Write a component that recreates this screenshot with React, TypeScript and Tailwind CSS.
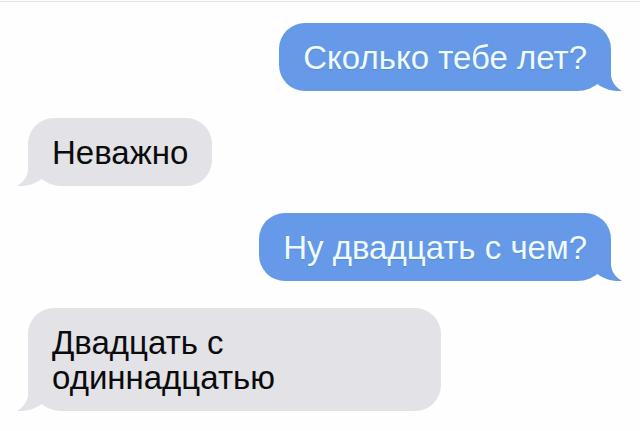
import React from 'react';
import clsx from 'clsx';

type Message = {
  id: number;
  text: string;
  mine: boolean;
};

const messages: Message[] = [
  { id: 1, text: 'Сколько тебе лет?', mine: true },
  { id: 2, text: 'Неважно', mine: false },
  { id: 3, text: 'Ну двадцать с чем?', mine: true },
  { id: 4, text: 'Двадцать с одиннадцатью', mine: false },
];

const Tail: React.FC<{ mine: boolean }> = ({ mine }) => (
  <svg
    aria-hidden="true"
    viewBox="0 0 32 36"
    className={clsx(
      'absolute bottom-0 w-8 h-9',
      mine ? '-right-[11px] text-[#6699e7]' : '-left-[11px] -scale-x-100 text-[#e2e2e7]'
    )}
  >
    <path
      fill="currentColor"
      d="M0 0H21V20C21.5 27 26 32.5 32 36C23 36.6 13.5 34 7.5 29L0 22Z"
    />
  </svg>
);

const Bubble: React.FC<{ message: Message }> = ({ message }) => (
  <li
    className={clsx(
      'relative w-fit max-w-[413px] px-6 pt-[17px] pb-4 rounded-[26px]',
      message.mine
        ? 'self-end rounded-br-[34px] bg-[#6699e7] text-[#effcff]'
        : 'self-start rounded-bl-[34px] bg-[#e2e2e7] text-[#0b0b0d]'
    )}
  >
    <Tail mine={message.mine} />
    <p className={clsx('relative', message.mine && '[text-shadow:0_1px_1px_#5a8ad2]')}>{message.text}</p>
  </li>
);

const App: React.FC = () => {
  return (
    <main className="min-h-screen bg-[#fefefe] pt-px font-['Liberation_Sans',Arial,sans-serif] text-[33px] leading-[35px]">
      <ul className="flex flex-col gap-[27px] border-t border-[#e6e6e6] pl-7 pr-[29px] pt-[21px] pb-5">
        {messages.map((message) => (
          <Bubble key={message.id} message={message} />
        ))}
      </ul>
    </main>
  );
};

export default App;
